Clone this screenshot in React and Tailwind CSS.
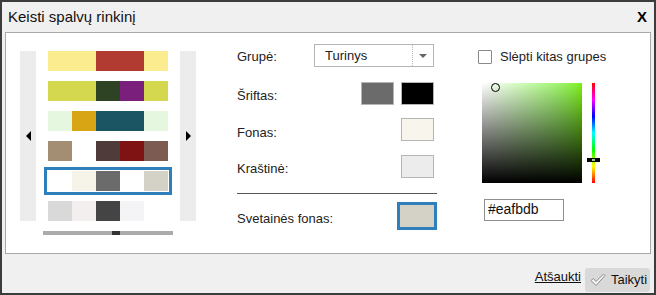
import React from 'react';

const rows = [
  ['#faec8f', '#faec8f', '#b13a31', '#b13a31', '#faec8f'],
  ['#d4d84f', '#d4d84f', '#2e4224', '#7a1f7c', '#d4d84f'],
  ['#e6f7df', '#d8a614', '#1b5564', '#1b5564', '#e6f7df'],
  ['#a38d73', '#ffffff', '#4f3b39', '#7f1213', '#7b5b52'],
  ['#ffffff', '#f6f3e9', '#6b6b6b', '#ffffff', '#d4d2c6'],
  ['#d9d9d9', '#f3efef', '#444444', '#f4f4f7', '#ffffff'],
];

const Swatch = ({ color }) => (
  <div className="w-[33px] h-[23px] border border-[#b5b5b5]" style={{ background: color }} />
);

const Row = ({ label, children, className = '' }) => (
  <div className={`flex items-center justify-between ${className}`}>
    <span className="mt-[5px]">{label}</span>
    <div className="flex gap-[7px]">{children}</div>
  </div>
);

export default function App() {
  return (
    <div className="w-[656px] h-[295px] border-2 border-[#3c3c3c] bg-[#f0f0f0] flex flex-col text-[13px] text-[#222] font-['Liberation_Sans',Arial,sans-serif]">
      {/* title bar */}
      <div className="h-[30px] flex items-center justify-between pl-[6px] pr-[7px]">
        <span className="text-[15px] text-[#111]">Keisti spalvų rinkinį</span>
        <span className="text-[15px] font-bold text-black">X</span>
      </div>

      {/* content panel */}
      <div className="mx-[3px] h-[222px] bg-white border border-[#a9a9a9] flex items-start pl-[14px]">
        {/* palettes carousel */}
        <div className="mt-[18px] flex flex-col">
          <div className="flex gap-[12px]">
            <div className="w-[16px] h-[170px] bg-[#ececec] flex items-center justify-center">
              <div className="w-0 h-0 border-y-[5px] border-y-transparent border-r-[5px] border-r-black" />
            </div>
            <div className="w-[120px] flex flex-col gap-[10px]">
              {rows.map((r, i) => (
                <div
                  key={i}
                  className={`flex h-[20px] ${i === 4 ? 'outline-[3px] outline-solid outline-offset-[1px] outline-[#2f7fba]' : ''}`}
                >
                  {r.map((c, j) => (
                    <div key={j} className="w-[24px] h-[20px]" style={{ background: c }} />
                  ))}
                </div>
              ))}
            </div>
            <div className="w-[16px] h-[170px] bg-[#ececec] flex items-center justify-center">
              <div className="w-0 h-0 border-y-[5px] border-y-transparent border-l-[5px] border-l-black" />
            </div>
          </div>
          <div className="relative mt-[10px] ml-[23px] w-[130px] h-[4px] bg-[#ababab]">
            <div className="absolute left-[69px] top-0 w-[8px] h-[4px] bg-[#333]" />
          </div>
        </div>

        {/* group settings */}
        <div className="ml-[41px] mt-[11px] w-[200px] flex flex-col">
          <div className="flex items-center justify-between pr-[3px]">
            <span className="mt-[3px]">Grupė:</span>
            <div className="w-[120px] h-[23px] border border-[#b5b5b5] flex items-center">
              <span className="flex-1 pl-[10px]">Turinys</span>
              <div className="w-[21px] h-full border-l border-dotted border-[#bbb] flex items-center justify-center">
                <div className="w-0 h-0 border-x-[4px] border-x-transparent border-t-[4px] border-t-[#666]" />
              </div>
            </div>
          </div>
          <Row label="Šriftas:" className="mt-[14px] pr-[3px]">
            <Swatch color="#6b6b6b" />
            <Swatch color="#000000" />
          </Row>
          <Row label="Fonas:" className="mt-[12px] pr-[3px]">
            <Swatch color="#f7f5ec" />
          </Row>
          <Row label="Kraštinė:" className="mt-[12px] pr-[3px]">
            <Swatch color="#ececec" />
          </Row>
          <div className="mt-[14px] h-px bg-[#555]" />
          <div className="mt-[8px] flex items-center justify-between">
            <span className="mt-[6px]">Svetainės fonas:</span>
            <div className="w-[40px] h-[28px] border-[3px] border-[#2f7fba] bg-[#d4d2c6]" />
          </div>
        </div>

        {/* colour picker */}
        <div className="ml-[41px] mt-[14px] flex flex-col">
          <label className="flex items-center gap-[8px]">
            <span className="w-[14px] h-[14px] border border-[#8a8a8a] bg-white rounded-[1px]" />
            <span>Slėpti kitas grupes</span>
          </label>
          <div className="mt-[16px] ml-[4px] flex">
            <div className="relative w-[100px] h-[100px] bg-linear-to-r from-white to-[#7ef000]">
              <div className="absolute inset-0 bg-linear-to-t from-black to-transparent" />
              <div className="absolute left-[9px] top-[0px] w-[9px] h-[9px] rounded-full border border-black" />
            </div>
            <div className="relative ml-[10px] w-[3px] h-[100px] bg-[linear-gradient(to_bottom,#f00,#f0f,#00f,#0ff,#0f0,#ff0,#f00)]">
              <div className="absolute -left-[5px] top-[75px] w-[13px] h-[4px] bg-black flex items-center justify-center">
                <div className="w-[3px] h-[2px] bg-[#9c9]" />
              </div>
            </div>
          </div>
          <div className="mt-[16px] ml-[6px] w-[80px] h-[22px] border border-[#8f8f8f] flex items-center pl-[3px] text-[14px] text-[#111]">
            #eafbdb
          </div>
        </div>
      </div>

      {/* footer */}
      <div className="flex-1 flex items-end justify-end gap-[4px] pr-[4px] pb-[1px]">
        <span className="underline mb-[6px] text-[#111]">Atšaukti</span>
        <button className="h-[24px] w-[65px] bg-[#d9d9d9] rounded-[3px] flex items-center gap-[5px] pl-[5px] text-[13px] text-[#111]">
          <svg width="16" height="14" viewBox="0 0 16 14">
            <path
              d="M1 7.5 L3.5 5.5 L6 8.5 L13.5 1 L15 2.5 L6 12.5 Z"
              fill="#f4f4f4"
              stroke="#8c8c8c"
              strokeWidth="1"
              strokeLinejoin="round"
            />
          </svg>
          <span>Taikyti</span>
        </button>
      </div>
    </div>
  );
}
